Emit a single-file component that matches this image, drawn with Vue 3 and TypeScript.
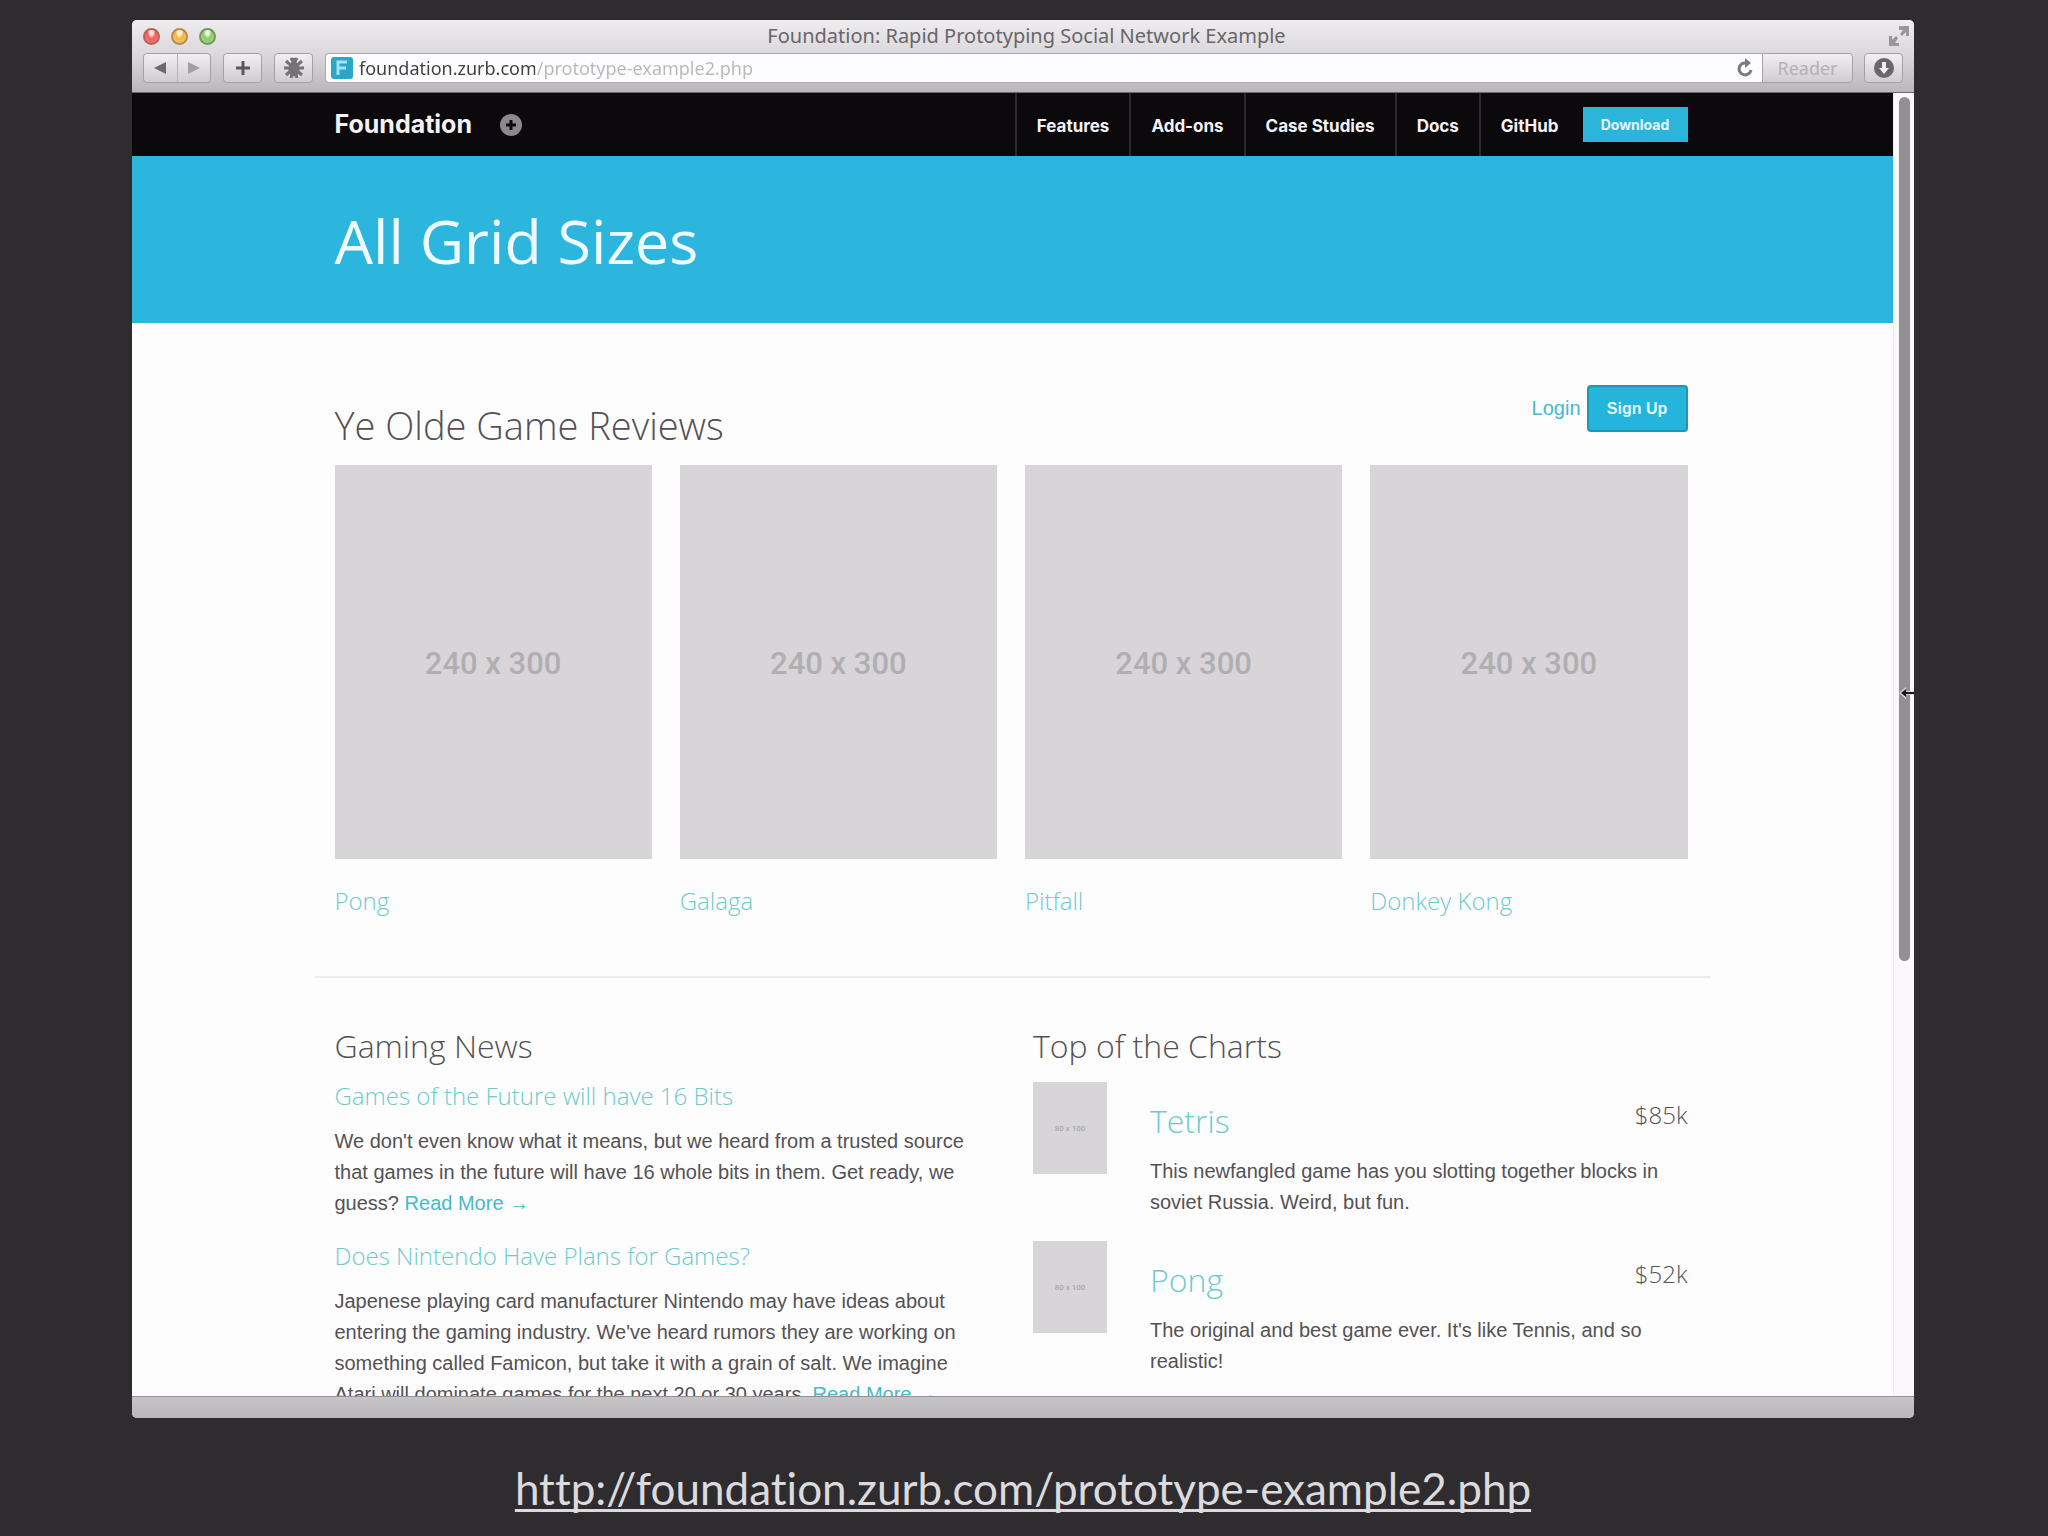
<script setup lang="ts">
import { ref } from 'vue'

interface NewsItem {
  title: string
  body: string
}

interface ChartEntry {
  name: string
  price: string
  body: string
}

const url = ref('foundation.zurb.com/prototype-example2.php')

const navLinks: string[] = ['Features', 'Add-ons', 'Case Studies', 'Docs', 'GitHub']
const reviews: string[] = ['Pong', 'Galaga', 'Pitfall', 'Donkey Kong']

const news: NewsItem[] = [
  {
    title: 'Games of the Future will have 16 Bits',
    body: "We don't even know what it means, but we heard from a trusted source that games in the future will have 16 whole bits in them. Get ready, we guess?",
  },
  {
    title: 'Does Nintendo Have Plans for Games?',
    body: "Japenese playing card manufacturer Nintendo may have ideas about entering the gaming industry. We've heard rumors they are working on something called Famicon, but take it with a grain of salt. We imagine Atari will dominate games for the next 20 or 30 years.",
  },
]

const charts: ChartEntry[] = [
  {
    name: 'Tetris',
    price: '$85k',
    body: 'This newfangled game has you slotting together blocks in soviet Russia. Weird, but fun.',
  },
  {
    name: 'Pong',
    price: '$52k',
    body: "The original and best game ever. It's like Tennis, and so realistic!",
  },
]
</script>

<template>
  <div class="slide">
    <div class="window">
      <header class="chrome">
        <div class="titlebar">
          <div class="lights">
            <button class="light red" aria-label="Close"></button>
            <button class="light yellow" aria-label="Minimise"></button>
            <button class="light green" aria-label="Zoom"></button>
          </div>
          <span class="title">Foundation: Rapid Prototyping Social Network Example</span>
          <div class="corner">
            <button class="expand" aria-label="Full screen">
              <svg width="22" height="22" viewBox="0 0 22 22" fill="#98969a">
                <path d="M11 1h10v10h-3V7l-4 4-2-2 3-4h-4z" />
                <path d="M11 21H1V11h3v4l4-4 2 2-3 5h4z" />
              </svg>
            </button>
          </div>
        </div>
        <div class="toolbar">
          <div class="tool history">
            <button aria-label="Back">
              <svg width="14" height="14" viewBox="0 0 14 14"><path d="M13 1v12L1 7z" fill="#6b696c" /></svg>
            </button>
            <button aria-label="Forward">
              <svg width="14" height="14" viewBox="0 0 14 14"><path d="M1 1v12l12-6z" fill="#a19fa2" /></svg>
            </button>
          </div>
          <button class="tool add" aria-label="Add bookmark">
            <svg width="16" height="16" viewBox="0 0 16 16" stroke="#5a585b" stroke-width="3"><path d="M8 1v14M1 8h14" /></svg>
          </button>
          <button class="tool bug" aria-label="Extension">
            <svg width="24" height="22" viewBox="0 0 24 22" stroke="#747275" stroke-width="3" fill="#747275">
              <ellipse cx="12" cy="12" rx="4" ry="6" />
              <path d="M2 11h20M4 4l16 14M20 4L4 18M9 1l3 5 3-5M9 21l1-4M15 21l-1-4" />
            </svg>
          </button>
          <div class="address">
            <svg class="favicon" width="22" height="22" viewBox="0 0 22 22">
              <rect width="22" height="22" rx="3" fill="#2ba6c8" />
              <path d="M7 18V5h9M7 11h8" fill="none" stroke="#a5e2f2" stroke-width="3" />
            </svg>
            <input v-model="url" class="url" type="text" aria-label="Address" />
            <button class="reload" aria-label="Reload">
              <svg width="18" height="20" viewBox="0 0 18 20" fill="none" stroke="#7b797c" stroke-width="3">
                <path d="M15 12a6 6 0 1 1-5-7" />
                <path d="M9 0l6 5-6 5z" fill="#7b797c" stroke="none" />
              </svg>
            </button>
          </div>
          <button class="tool reader" disabled>Reader</button>
          <button class="tool downloads" aria-label="Downloads">
            <svg width="20" height="20" viewBox="0 0 20 20">
              <circle cx="10" cy="10" r="10" fill="#69676a" />
              <path d="M8 4h4v6h3l-5 6-5-6h3z" fill="#f0eef1" />
            </svg>
          </button>
        </div>
      </header>

      <div class="viewport">
        <div class="page">
          <nav class="topnav">
            <div class="row nav-row">
              <a class="brand" href="#">Foundation</a>
              <button class="plus" aria-label="More">
                <svg width="22" height="22" viewBox="0 0 22 22">
                  <circle cx="11" cy="11" r="11" fill="#8b898c" />
                  <path d="M11 6v10M6 11h10" stroke="#0b090c" stroke-width="3" />
                </svg>
              </button>
              <ul class="links">
                <li v-for="link in navLinks" :key="link"><a href="#">{{ link }}</a></li>
              </ul>
              <button class="download">Download</button>
            </div>
          </nav>

          <div class="hero">
            <div class="row"><h1>All Grid Sizes</h1></div>
          </div>

          <main class="row">
            <div class="head">
              <h2>Ye Olde Game Reviews</h2>
              <div class="actions">
                <a href="#">Login</a>
                <button class="signup">Sign Up</button>
              </div>
            </div>
            <div class="cards">
              <article v-for="game in reviews" :key="game">
                <div class="placeholder">240 x 300</div>
                <h4><a href="#">{{ game }}</a></h4>
              </article>
            </div>
          </main>

          <div class="divider"></div>

          <div class="row columns">
            <section>
              <h3>Gaming News</h3>
              <article v-for="item in news" :key="item.title" class="news">
                <h4><a href="#">{{ item.title }}</a></h4>
                <p>{{ item.body }} <a href="#">Read More →</a></p>
              </article>
            </section>
            <section>
              <h3>Top of the Charts</h3>
              <article v-for="entry in charts" :key="entry.name" class="chart">
                <div class="thumb">80 x 100</div>
                <div class="entry">
                  <div class="entry-head">
                    <h3><a href="#">{{ entry.name }}</a></h3>
                    <span class="price">{{ entry.price }}</span>
                  </div>
                  <p>{{ entry.body }}</p>
                </div>
              </article>
            </section>
          </div>
        </div>

        <div class="scrollbar">
          <div class="thumb-bar"></div>
          <svg class="cursor" width="15" height="14" viewBox="0 0 15 14">
            <path d="M0 7l7-6v4h8v4H7v4z" fill="#d8d6d9" />
            <path d="M2 7l5-4v3h8v2H7v3z" fill="#1a181b" />
          </svg>
        </div>
      </div>
      <div class="statusbar"></div>
    </div>

    <footer class="caption">
      <a href="#">http://foundation.zurb.com/prototype-example2.php</a>
    </footer>
  </div>
</template>

<style>
body {
  background: #2e2c2f;
}
</style>

<style scoped>
* {
  box-sizing: border-box;
}

h1, h2, h3, h4, p, ul {
  margin: 0;
  padding: 0;
  font-weight: 300;
}

button {
  padding: 0;
  border: 0;
  background: none;
  display: flex;
  align-items: center;
  justify-content: center;
}

a {
  text-decoration: none;
}

.slide {
  height: 100vh;
  padding: 20px 134px 0 132px;
  display: flex;
  flex-direction: column;
  background: #2e2c2f;
  overflow: hidden;
}

.window {
  flex: 1;
  min-height: 0;
  display: flex;
  flex-direction: column;
  border-radius: 5px;
  overflow: hidden;
  background: #fefdfe;
}

.chrome {
  flex: none;
  height: 73px;
  background: linear-gradient(#eeecef, #d9d7da 50%, #b9b7ba);
  border-bottom: 1px solid #6b696c;
}

.titlebar {
  height: 32px;
  padding: 0 4px 0 11px;
  display: flex;
  align-items: center;
}

.lights {
  flex: 1;
  display: flex;
  gap: 11px;
}

.corner {
  flex: 1;
  display: flex;
  justify-content: flex-end;
}

.light {
  width: 17px;
  height: 17px;
  border-radius: 50%;
  border: 2px solid;
}

.red {
  border-color: #b9605f;
  background: radial-gradient(ellipse at 50% 15%, #fbdad6 20%, #ec5f5d 45%, #f58a86);
}

.yellow {
  border-color: #b98a4c;
  background: radial-gradient(ellipse at 50% 15%, #fdeecb 20%, #f2b442 45%, #fad873);
}

.green {
  border-color: #6f9a58;
  background: radial-gradient(ellipse at 50% 15%, #e4f6d8 20%, #8ec66a 45%, #b8e29a);
}

.title {
  font: 20px/32px "Noto Sans", "Open Sans", sans-serif;
  color: #68666a;
}

.toolbar {
  height: 32px;
  padding: 0 11px;
  display: flex;
  align-items: center;
}

.tool {
  height: 30px;
  border: 1px solid #a3a1a4;
  border-radius: 4px;
  background: linear-gradient(#f1eff2, #cfcdd0);
}

.history {
  width: 68px;
  display: flex;
  margin-right: 12px;
}

.history button {
  flex: 1;
}

.history button + button {
  border-left: 1px solid #b5b3b6;
}

.add,
.bug {
  width: 39px;
  margin-right: 12px;
}

.address {
  flex: 1;
  height: 30px;
  padding: 0 8px 0 5px;
  display: flex;
  align-items: center;
  background: #fdfcfe;
  border: 1px solid #aaa8ab;
  border-right: 0;
  border-radius: 4px 0 0 4px;
}

.url {
  flex: 1;
  height: 28px;
  margin-left: 6px;
  padding: 0;
  border: 0;
  outline: 0;
  font: 18px/28px "Noto Sans", "Open Sans", sans-serif;
  color: transparent;
  background: linear-gradient(90deg, #3f3d40 176px, #b9b7ba 176px);
  background-clip: text;
  -webkit-background-clip: text;
}

.reader {
  width: 91px;
  margin-right: 11px;
  border-radius: 0 4px 4px 0;
  font: 18px/28px "Noto Sans", "Open Sans", sans-serif;
  color: #b3b1b4;
}

.downloads {
  width: 39px;
}

.viewport {
  flex: 1;
  min-height: 0;
  display: flex;
}

.page {
  flex: 1;
  overflow: hidden;
  font-family: "Liberation Sans", Arial, sans-serif;
  font-size: 20px;
  line-height: 31px;
  color: #535154;
}

.row {
  max-width: 1396px;
  margin: 0 auto;
  padding: 0 23px 0 20px;
}

.topnav {
  height: 63px;
  background: #0b090c;
  font-family: Inter, Roboto, sans-serif;
}

.nav-row {
  height: 100%;
  display: flex;
  align-items: center;
}

.brand {
  font-size: 25px;
  font-weight: 700;
  color: #f4f2f5;
}

.plus {
  margin-left: 28px;
}

.links {
  height: 100%;
  margin-left: auto;
  display: flex;
  list-style: none;
}

.links li {
  height: 100%;
  padding: 0 20px;
  border-left: 2px solid #2b292c;
  line-height: 67px;
  font-size: 17px;
  font-weight: 700;
}

.links li:last-child {
  padding-right: 24px;
}

.links a {
  color: #f4f2f5;
}

.download {
  width: 105px;
  height: 35px;
  font: 700 14px/35px Inter, Roboto, sans-serif;
  color: #e3f6fb;
  background: #2cb5da;
}

.hero {
  height: 167px;
  padding-top: 2px;
  background: #2db6dd;
}

h1, h2, h3, h4 {
  font-family: "Open Sans", "Noto Sans", sans-serif;
}

h1 {
  font-size: 61px;
  line-height: 165px;
  font-weight: 400;
  color: #eefaff;
}

h2 {
  font-size: 38px;
  line-height: 50px;
}

h3 {
  font-size: 32px;
  line-height: 44px;
}

h4 {
  font-size: 24px;
  line-height: 32px;
}

h3 a, h4 a {
  color: #6ccbcf;
}

.head {
  height: 142px;
  padding: 62px 0 15px;
  display: flex;
  justify-content: space-between;
}

.head h2 {
  align-self: flex-end;
}

.actions {
  height: 47px;
  display: flex;
  align-items: center;
  gap: 6px;
}

.actions a, p a {
  color: #45b9cd;
}

.signup {
  width: 101px;
  height: 47px;
  border: 2px solid #2594b4;
  border-radius: 4px;
  font: 700 16px/43px "Liberation Sans", Arial, sans-serif;
  color: #e3f6fb;
  background: #24b4dc;
}

.cards {
  display: grid;
  grid-template-columns: repeat(4, 1fr);
  gap: 28px;
}

.placeholder {
  height: 394px;
  padding-top: 4px;
  display: flex;
  align-items: center;
  justify-content: center;
  background: #d7d5d8;
  color: #b0aeb1;
  font: 500 31px/40px Roboto, sans-serif;
}

.cards h4 {
  margin-top: 26px;
}

.divider {
  max-width: 1396px;
  height: 2px;
  margin: 59px auto 46px;
  background: #eeecef;
}

.columns {
  display: grid;
  grid-template-columns: 1fr 1fr;
  gap: 44px;
}

.news {
  margin: 12px 0 21px;
}

.news p {
  margin-top: 14px;
}

.chart {
  display: flex;
  gap: 43px;
  margin: 14px 0 23px;
}

.thumb {
  flex: none;
  width: 74px;
  height: 92px;
  text-align: center;
  font: 500 8px/94px Roboto, sans-serif;
  color: #aaa8ab;
  background: #d7d5d8;
}

.entry {
  flex: 1;
  padding-top: 17px;
}

.entry-head {
  display: flex;
  justify-content: space-between;
  margin-bottom: 13px;
}

.price {
  font: 300 24px/32px "Open Sans", "Noto Sans", sans-serif;
}

.scrollbar {
  position: relative;
  flex: none;
  width: 21px;
  padding: 4px 4px 0 5px;
  border-left: 1px solid #eceaed;
  background: #faf8fb;
}

.thumb-bar {
  width: 11px;
  height: 66.5%;
  border-radius: 6px;
  background: #929093;
}

.cursor {
  position: absolute;
  right: 0;
  top: 45.5%;
}

.statusbar {
  flex: none;
  height: 22px;
  border-top: 1px solid #929093;
  background: linear-gradient(#c6c4c7, #b8b6b9);
}

.caption {
  flex: none;
  height: 118px;
  padding-top: 40px;
  text-align: center;
  font: 44px/60px Lato, sans-serif;
  font-variant-ligatures: none;
}

.caption a {
  color: #dcdadd;
  text-decoration: underline;
  text-decoration-thickness: 3px;
  text-underline-offset: 4px;
  text-decoration-skip-ink: none;
}
</style>
